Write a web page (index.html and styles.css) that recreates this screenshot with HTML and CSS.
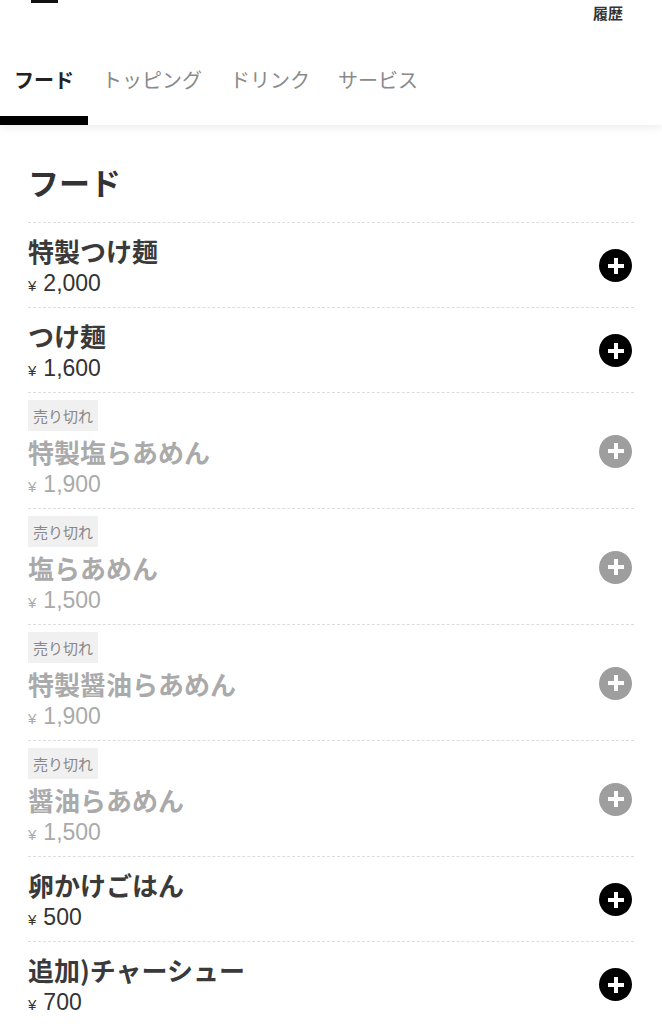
FILE: index.html
```html
<!DOCTYPE html>
<html lang="ja">
<head>
  <meta charset="UTF-8">
  <title>メニュー</title>
  <link rel="stylesheet" href="styles.css">
</head>
<body>
  <header class="header">
    <div class="topbar">
      <span class="menu-line"></span>
      <a class="history" href="#">履歴</a>
    </div>
    <nav class="tabs">
      <a class="tab active" href="#">フード</a>
      <a class="tab" href="#">トッピング</a>
      <a class="tab" href="#">ドリンク</a>
      <a class="tab" href="#">サービス</a>
    </nav>
  </header>

  <main class="content">
    <h2 class="section-title">フード</h2>
    <ul class="items">
      <li class="item">
        <div class="info">
          <div class="name">特製つけ麺</div>
          <div class="price"><span class="yen">¥</span>2,000</div>
        </div>
        <button class="add"></button>
      </li>
      <li class="item">
        <div class="info">
          <div class="name">つけ麺</div>
          <div class="price"><span class="yen">¥</span>1,600</div>
        </div>
        <button class="add"></button>
      </li>
      <li class="item soldout">
        <div class="info">
          <span class="badge">売り切れ</span>
          <div class="name">特製塩らあめん</div>
          <div class="price"><span class="yen">¥</span>1,900</div>
        </div>
        <button class="add" disabled></button>
      </li>
      <li class="item soldout">
        <div class="info">
          <span class="badge">売り切れ</span>
          <div class="name">塩らあめん</div>
          <div class="price"><span class="yen">¥</span>1,500</div>
        </div>
        <button class="add" disabled></button>
      </li>
      <li class="item soldout">
        <div class="info">
          <span class="badge">売り切れ</span>
          <div class="name">特製醤油らあめん</div>
          <div class="price"><span class="yen">¥</span>1,900</div>
        </div>
        <button class="add" disabled></button>
      </li>
      <li class="item soldout">
        <div class="info">
          <span class="badge">売り切れ</span>
          <div class="name">醤油らあめん</div>
          <div class="price"><span class="yen">¥</span>1,500</div>
        </div>
        <button class="add" disabled></button>
      </li>
      <li class="item">
        <div class="info">
          <div class="name">卵かけごはん</div>
          <div class="price"><span class="yen">¥</span>500</div>
        </div>
        <button class="add"></button>
      </li>
      <li class="item">
        <div class="info">
          <div class="name">追加)チャーシュー</div>
          <div class="price"><span class="yen">¥</span>700</div>
        </div>
        <button class="add"></button>
      </li>
    </ul>
  </main>
</body>
</html>
```

FILE: styles.css
```css
body {
  margin: 0;
  font-family: "Noto Sans CJK JP", "Noto Sans", sans-serif;
  color: #333;
  background: #fff;
}
a {
  text-decoration: none;
  color: inherit;
}

/* ヘッダー */
.header {
  background: #fff;
  box-shadow: 0 3px 8px rgba(0, 0, 0, 0.07);
}
.topbar {
  height: 40px;
  display: flex;
  justify-content: space-between;
  align-items: flex-start;
}
.menu-line {
  display: block;
  width: 27px;
  height: 3px;
  margin-left: 31px;
  background: #111;
}
.history {
  margin-right: 39px;
  margin-top: 3px;
  font-size: 15px;
  line-height: 20px;
  font-weight: bold;
  color: #333;
}
.tabs {
  display: flex;
}
.tab {
  padding: 28px 14px 24px;
  font-size: 20px;
  line-height: 24px;
  color: #8a8a8a;
  border-bottom: 9px solid transparent;
}
.tab.active {
  color: #222;
  font-weight: bold;
  border-bottom-color: #000;
}

/* メニュー */
.content {
  padding: 35px 28px 0;
}
.section-title {
  margin: 0 0 18px;
  font-size: 31px;
  line-height: 44px;
  font-weight: bold;
  color: #333;
}
.items {
  list-style: none;
  margin: 0;
  padding: 0;
}
.item {
  display: flex;
  justify-content: space-between;
  align-items: center;
  padding: 10px 0 9px;
  border-top: 1px dashed #ddd;
}
.name {
  font-size: 26px;
  line-height: 36px;
  font-weight: bold;
  color: #3a3a3a;
}
.price {
  font-family: "Liberation Sans", Arial, sans-serif;
  font-size: 23px;
  line-height: 29px;
  color: #333;
}
.yen {
  font-size: 15px;
  line-height: 1;
  margin-right: 7px;
}
.badge {
  display: inline-block;
  margin-top: -3px;
  margin-bottom: 3px;
  padding: 4px 5px;
  font-size: 15px;
  line-height: 23px;
  background: #f0f0f0;
  color: #888;
}
.soldout .name,
.soldout .price {
  color: #aaa;
}

/* 追加ボタン */
.add {
  position: relative;
  width: 33px;
  height: 33px;
  margin-right: 2px;
  padding: 0;
  border: none;
  border-radius: 50%;
  background: #000;
  cursor: pointer;
}
.add::before,
.add::after {
  content: "";
  position: absolute;
  left: 50%;
  top: 50%;
  background: #fff;
  transform: translate(-50%, -50%);
}
.add::before {
  width: 16px;
  height: 4px;
}
.add::after {
  width: 4px;
  height: 16px;
}
.add:disabled {
  background: #9e9e9e;
  cursor: default;
}
```
